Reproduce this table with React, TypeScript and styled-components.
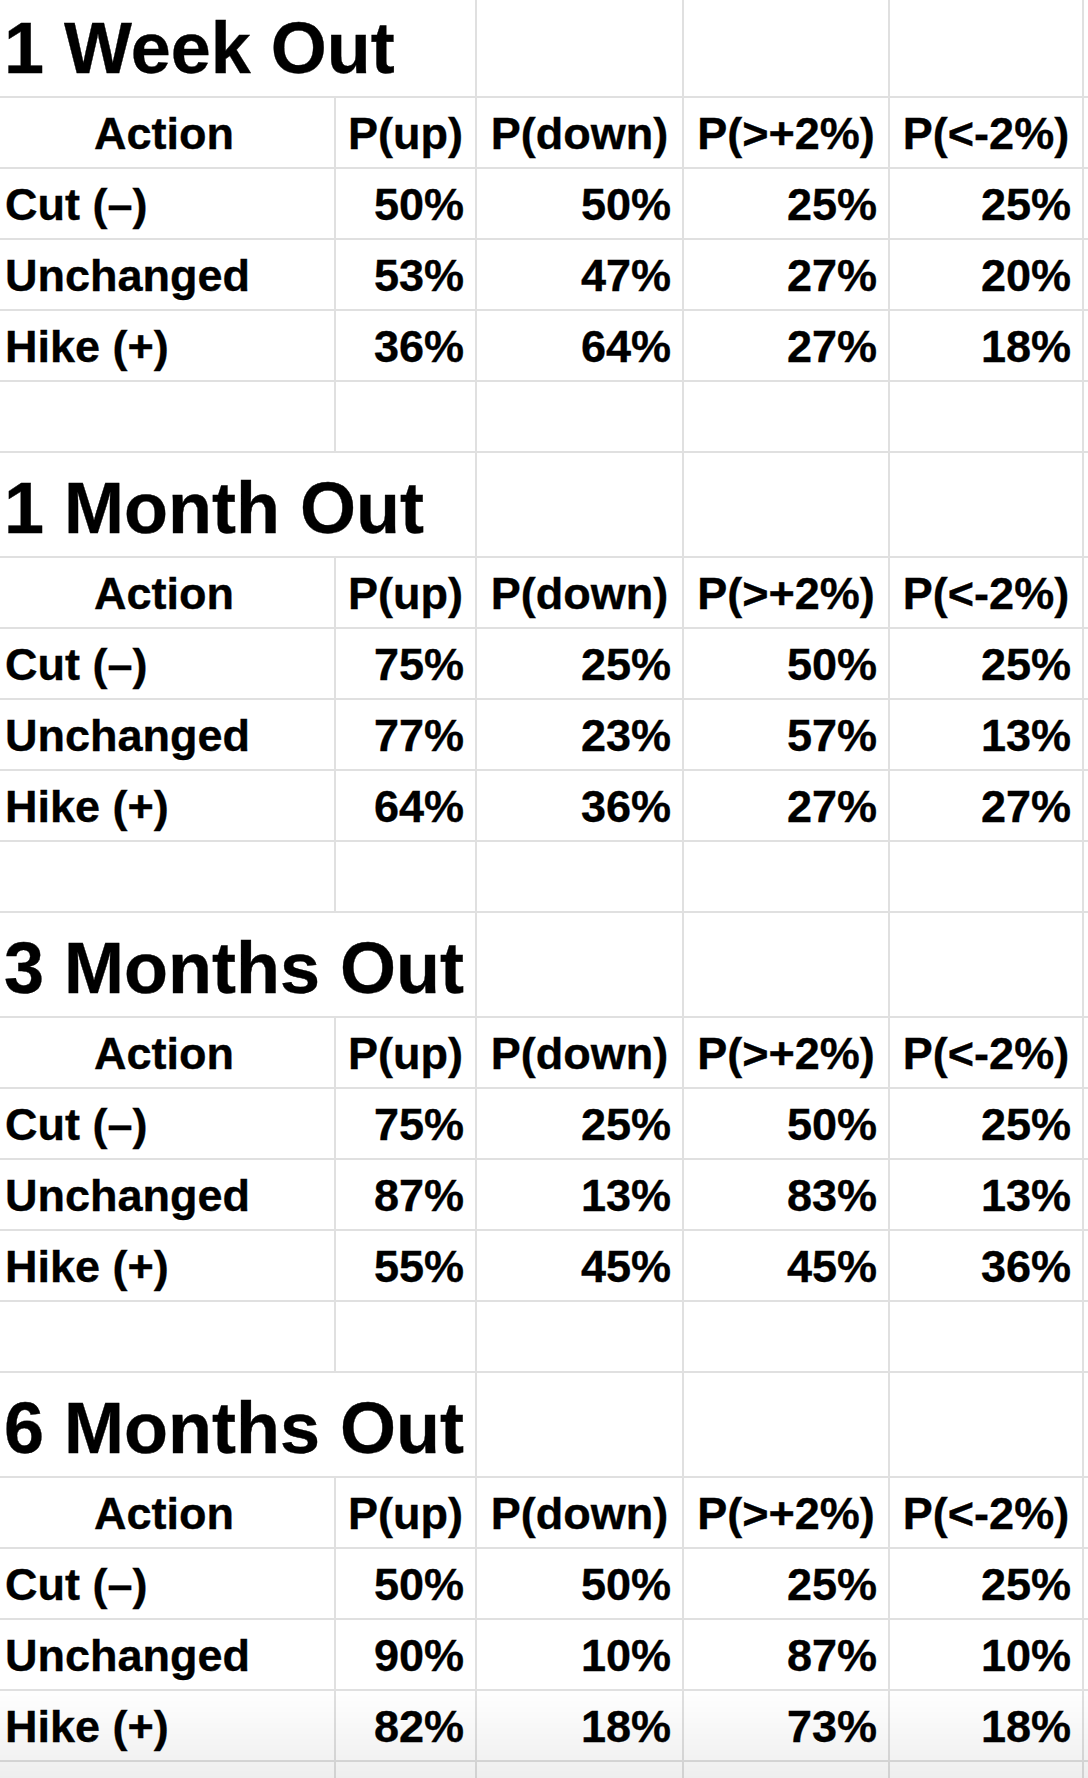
import React from "react";
import styled, { createGlobalStyle } from "styled-components";

const GlobalStyle = createGlobalStyle`
  html, body {
    margin: 0;
    padding: 0;
    background: #ffffff;
    overflow: hidden;
  }

  * {
    box-sizing: border-box;
  }
`;

const GRID = "#e0e0e0";

const Sheet = styled.div`
  margin-top: -7px;
  width: 1088px;
  font-family: "Liberation Sans", Arial, sans-serif;
  font-weight: bold;
  color: #000000;
  -webkit-text-stroke: 0.35px #000000;
`;

const Row = styled.div<{ $height: number }>`
  display: grid;
  grid-template-columns: 336px 141px 207px 206px 194px 4px;
  height: ${({ $height }) => $height}px;
`;

const Cell = styled.div<{ $align?: "left" | "center" | "right" }>`
  display: flex;
  align-items: flex-end;
  justify-content: ${({ $align }) =>
    $align === "right" ? "flex-end" : $align === "center" ? "center" : "flex-start"};
  padding: 0 11px 7px 5px;
  border-right: 2px solid ${GRID};
  border-bottom: 2px solid ${GRID};
  font-size: 45px;
  white-space: nowrap;
  overflow: visible;
`;

const HeaderCell = styled(Cell)`
  padding-left: 0;
  padding-right: 0;
`;

const ActionHeader = styled(HeaderCell)`
  padding-right: 6px;
`;

const TitleCell = styled(Cell)`
  grid-column: span 2;
  padding-left: 4px;
  font-size: 72px;
`;

const BottomShade = styled.div`
  position: fixed;
  left: 0;
  right: 0;
  bottom: 0;
  height: 90px;
  pointer-events: none;
  background: linear-gradient(
    to bottom,
    rgba(0, 0, 0, 0) 0%,
    rgba(0, 0, 0, 0.05) 78%,
    rgba(0, 0, 0, 0.065) 100%
  );
`;

interface IOutcome {
  action: string;
  values: number[];
}

interface ISection {
  title: string;
  rows: IOutcome[];
}

const headers = ["P(up)", "P(down)", "P(>+2%)", "P(<-2%)"];

const sections: ISection[] = [
  {
    title: "1 Week Out",
    rows: [
      { action: "Cut (–)", values: [50, 50, 25, 25] },
      { action: "Unchanged", values: [53, 47, 27, 20] },
      { action: "Hike (+)", values: [36, 64, 27, 18] },
    ],
  },
  {
    title: "1 Month Out",
    rows: [
      { action: "Cut (–)", values: [75, 25, 50, 25] },
      { action: "Unchanged", values: [77, 23, 57, 13] },
      { action: "Hike (+)", values: [64, 36, 27, 27] },
    ],
  },
  {
    title: "3 Months Out",
    rows: [
      { action: "Cut (–)", values: [75, 25, 50, 25] },
      { action: "Unchanged", values: [87, 13, 83, 13] },
      { action: "Hike (+)", values: [55, 45, 45, 36] },
    ],
  },
  {
    title: "6 Months Out",
    rows: [
      { action: "Cut (–)", values: [50, 50, 25, 25] },
      { action: "Unchanged", values: [90, 10, 87, 10] },
      { action: "Hike (+)", values: [82, 18, 73, 18] },
    ],
  },
];

const EmptyCells: React.FC<{ count: number }> = ({ count }) => (
  <>
    {Array.from({ length: count }).map((_, i) => (
      <Cell key={i} />
    ))}
  </>
);

const Section: React.FC<{ section: ISection }> = ({ section }) => {
  return (
    <>
      <Row $height={105}>
        <TitleCell>{section.title}</TitleCell>
        <EmptyCells count={4} />
      </Row>
      <Row $height={71}>
        <ActionHeader $align="center">Action</ActionHeader>
        {headers.map((h) => (
          <HeaderCell key={h} $align="center">
            {h}
          </HeaderCell>
        ))}
        <Cell />
      </Row>
      {section.rows.map((row) => (
        <Row $height={71} key={row.action}>
          <Cell>{row.action}</Cell>
          {row.values.map((v, i) => (
            <Cell key={i} $align="right">
              {v}%
            </Cell>
          ))}
          <Cell />
        </Row>
      ))}
      <Row $height={71}>
        <EmptyCells count={6} />
      </Row>
    </>
  );
};

const App: React.FC = () => {
  return (
    <>
      <GlobalStyle />
      <Sheet>
        {sections.map((s) => (
          <Section key={s.title} section={s} />
        ))}
      </Sheet>
      <BottomShade />
    </>
  );
};

export default App;
